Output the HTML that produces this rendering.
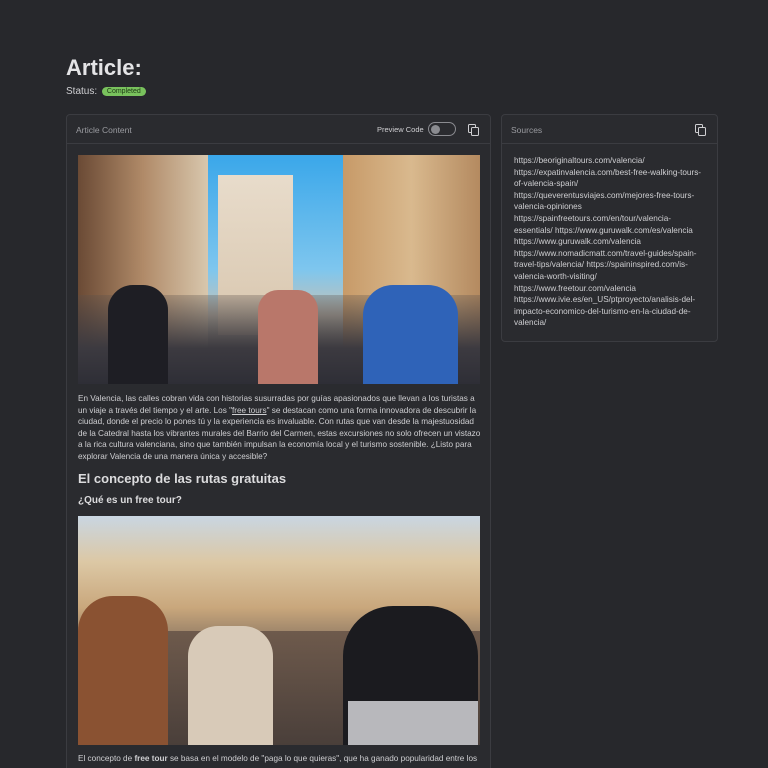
<!DOCTYPE html>
<html><head><meta charset="utf-8"><style>
*{margin:0;padding:0;box-sizing:border-box}
html,body{width:768px;height:768px;overflow:hidden}
body{background:#27282c;font-family:"Liberation Sans",sans-serif;color:#d4d4d6;position:relative}
h1{position:absolute;left:66px;top:55px;font-size:22px;font-weight:700;color:#e4e4e6}
.st{position:absolute;left:66px;top:86px;font-size:10px;color:#cfcfd2}
.badge{display:inline-block;background:#79c25d;color:#1d3a14;font-size:7px;padding:1px 5px;border-radius:6px;vertical-align:1px;margin-left:2px}
.card{position:absolute;border:1px solid #3b3c41;border-radius:4px;background:#2a2b2f}
.hd{height:29px;border-bottom:1px solid #3b3c41;font-size:8.5px;color:#9a9ba0;padding:10px 9px}
.cp{position:absolute;top:9px;width:10px;height:11px}
.cp:before,.cp:after{content:"";position:absolute;width:6px;height:7px;border:1.3px solid #cfcfd2;border-radius:1.5px}
.cp:before{left:0;top:0}.cp:after{left:3px;top:3px;background:#2a2b2f}
.txt{font-size:8.2px;line-height:11.6px;color:#cfcfd2}
.img{position:absolute;left:11px;width:402px;height:229px;overflow:hidden}
.img div{position:absolute}
</style></head><body>
<h1>Article:</h1>
<div class="st">Status: <span class="badge">Completed</span></div>

<div class="card" style="left:66px;top:114px;width:425px;height:660px">
<div class="hd">Article Content
<span style="position:absolute;left:310px;top:10px;font-size:7.5px;color:#cfcfd2">Preview Code</span>
<span style="position:absolute;left:361px;top:7px;width:28px;height:14px;border:1px solid #8a8b90;border-radius:8px"><span style="position:absolute;left:2px;top:2px;width:9px;height:9px;border-radius:50%;background:#8a8b90"></span></span>
<span class="cp" style="left:401px"></span>
</div>
<div class="img" style="top:40px;background:linear-gradient(180deg,#3aa7ea 0%,#7ec6ee 50%,#c8c2b4 70%,#8a7f70 100%)">
<div style="left:0;top:0;width:130px;height:229px;background:linear-gradient(90deg,#6a4a35,#b08a68 50%,#d8c7ad)"></div>
<div style="left:265px;top:0;width:137px;height:229px;background:linear-gradient(90deg,#c79a68,#d9b98e 50%,#b48a60)"></div>
<div style="left:140px;top:20px;width:75px;height:160px;background:linear-gradient(180deg,#e8dccb,#d8c6ae)"></div>
<div style="left:0;top:140px;width:402px;height:89px;background:linear-gradient(180deg,rgba(90,80,75,.3),#3c3a40 60%,#2e2e36)"></div>
<div style="left:285px;top:130px;width:95px;height:99px;background:#2f63b8;border-radius:30px 30px 0 0"></div>
<div style="left:180px;top:135px;width:60px;height:94px;background:#b9776a;border-radius:20px 20px 0 0"></div>
<div style="left:30px;top:130px;width:60px;height:99px;background:#1e1e24;border-radius:25px 25px 0 0"></div>
</div>
<div class="txt" style="position:absolute;left:11px;top:278px;width:404px">En Valencia, las calles cobran vida con historias susurradas por guías apasionados que llevan a los turistas a un viaje a través del tiempo y el arte. Los "<u>free tours</u>" se destacan como una forma innovadora de descubrir la ciudad, donde el precio lo pones tú y la experiencia es invaluable. Con rutas que van desde la majestuosidad de la Catedral hasta los vibrantes murales del Barrio del Carmen, estas excursiones no solo ofrecen un vistazo a la rica cultura valenciana, sino que también impulsan la economía local y el turismo sostenible. ¿Listo para explorar Valencia de una manera única y accesible?</div>
<div style="position:absolute;left:11px;top:356px;font-size:13px;font-weight:700;color:#dcdcde">El concepto de las rutas gratuitas</div>
<div style="position:absolute;left:11px;top:380px;font-size:10px;font-weight:700;color:#dcdcde">¿Qué es un free tour?</div>
<div class="img" style="top:401px;background:linear-gradient(180deg,#c9d6e2 0%,#dcc8a5 20%,#c9a77c 40%,#7b6a5c 60%,#4a3e38 100%)">
<div style="left:0;top:115px;width:402px;height:114px;background:linear-gradient(180deg,#6e5a4c,#4a3f3a)"></div>
<div style="left:0;top:80px;width:90px;height:149px;background:#8a5232;border-radius:35px 35px 0 0"></div>
<div style="left:110px;top:110px;width:85px;height:119px;background:#d8cab8;border-radius:30px 30px 0 0"></div>
<div style="left:265px;top:90px;width:135px;height:139px;background:#1b1b1f;border-radius:50px 50px 0 0"></div>
<div style="left:270px;top:185px;width:130px;height:44px;background:#b8b8bc"></div>
</div>
<div class="txt" style="position:absolute;left:11px;top:638px;width:404px">El concepto de <b>free tour</b> se basa en el modelo de "paga lo que quieras", que ha ganado popularidad entre los</div>
</div>

<div class="card" style="left:501px;top:114px;width:217px;height:228px">
<div class="hd">Sources<span class="cp" style="left:193px"></span></div>
<div class="txt" style="padding:11px 12px 0 12px;font-size:8.2px">https://beoriginaltours.com/valencia/<br>https://expatinvalencia.com/best-free-walking-tours-of-valencia-spain/<br>https://queverentusviajes.com/mejores-free-tours-valencia-opiniones<br>https://spainfreetours.com/en/tour/valencia-essentials/ https://www.guruwalk.com/es/valencia<br>https://www.guruwalk.com/valencia<br>https://www.nomadicmatt.com/travel-guides/spain-travel-tips/valencia/ https://spaininspired.com/is-valencia-worth-visiting/<br>https://www.freetour.com/valencia<br>https://www.ivie.es/en_US/ptproyecto/analisis-del-impacto-economico-del-turismo-en-la-ciudad-de-valencia/</div>
</div>
</body></html>
